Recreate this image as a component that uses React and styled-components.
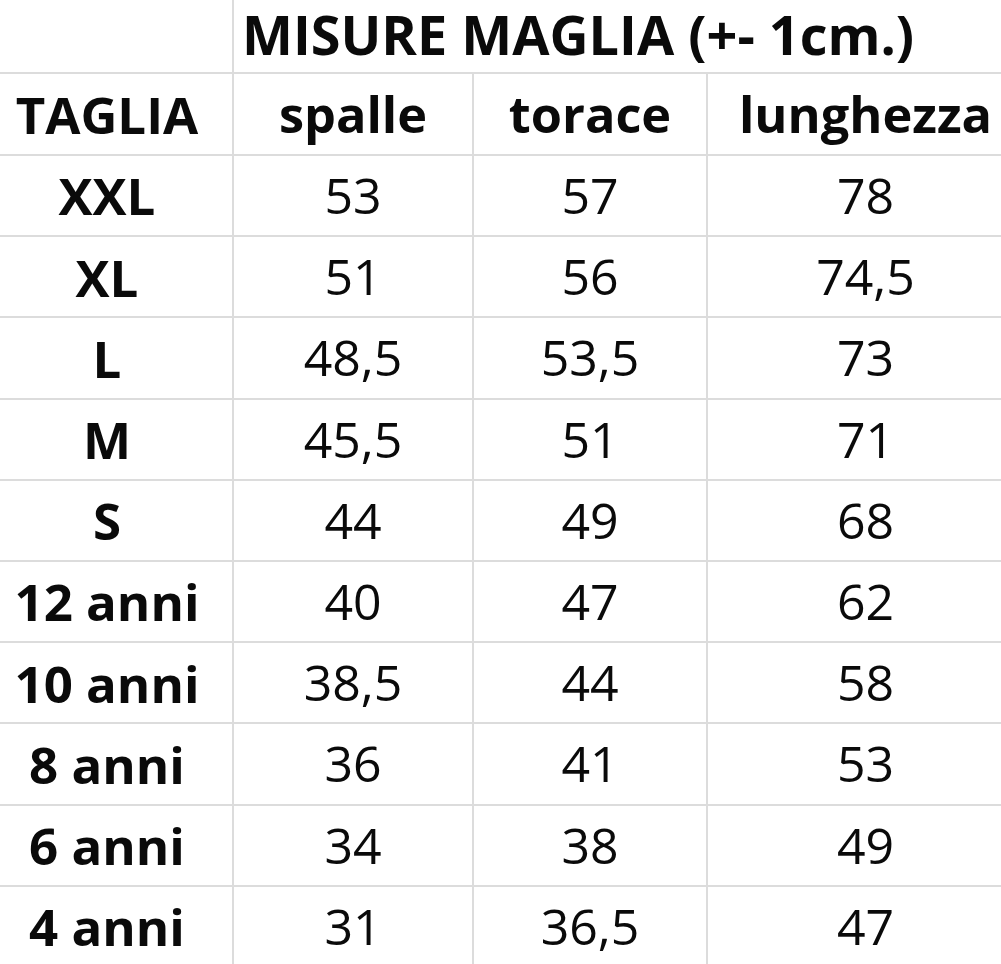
import React from 'react';
import styled, { createGlobalStyle } from 'styled-components';

const GlobalStyle = createGlobalStyle`
  html, body {
    margin: 0;
    padding: 0;
    background: #fff;
    overflow: hidden;
  }
`;

const rows = [
  ['XXL', '53', '57', '78'],
  ['XL', '51', '56', '74,5'],
  ['L', '48,5', '53,5', '73'],
  ['M', '45,5', '51', '71'],
  ['S', '44', '49', '68'],
  ['12 anni', '40', '47', '62'],
  ['10 anni', '38,5', '44', '58'],
  ['8 anni', '36', '41', '53'],
  ['6 anni', '34', '38', '49'],
  ['4 anni', '31', '36,5', '47'],
];

const Sheet = styled.div`
  width: 1001px;
  height: 964px;
  overflow: hidden;
  font-family: "Open Sans", "Liberation Sans", sans-serif;
  color: #0a0a0a;
`;

const Grid = styled.div`
  display: grid;
  width: 1001px;
  grid-template-columns: 232px 238px 232px 293px;
  grid-template-rows: 72px 80px repeat(10, 79.2px);
  gap: 2px;
  background: #dcdcdc;
`;

const Cell = styled.div`
  background: #fff;
  display: flex;
  align-items: center;
  justify-content: center;
  font-size: 50px;
  font-weight: 400;
  white-space: nowrap;
  line-height: 1.3;
  padding-left: ${(p) => (p.$last ? '22px' : '0')};
`;

const SizeCell = styled(Cell)`
  font-weight: 700;
  font-size: 51px;
  padding-right: 18px;
`;

const HeadCell = styled(Cell)`
  font-weight: 700;
  font-size: 50.5px;
`;

const TitleCell = styled(Cell)`
  grid-column: 2 / 5;
  justify-content: flex-start;
  padding: 4px 0 6px 8px;
  font-weight: 700;
  font-size: 54px;
  line-height: 1.1;
`;

export default function App() {
  return (
    <Sheet>
      <GlobalStyle />
      <Grid>
        <Cell />
        <TitleCell>MISURE MAGLIA (+- 1cm.)</TitleCell>
        <SizeCell>TAGLIA</SizeCell>
        <HeadCell>spalle</HeadCell>
        <HeadCell>torace</HeadCell>
        <HeadCell $last>lunghezza</HeadCell>
        {rows.map((r) => (
          <React.Fragment key={r[0]}>
            <SizeCell>{r[0]}</SizeCell>
            <Cell>{r[1]}</Cell>
            <Cell>{r[2]}</Cell>
            <Cell $last>{r[3]}</Cell>
          </React.Fragment>
        ))}
      </Grid>
    </Sheet>
  );
}
